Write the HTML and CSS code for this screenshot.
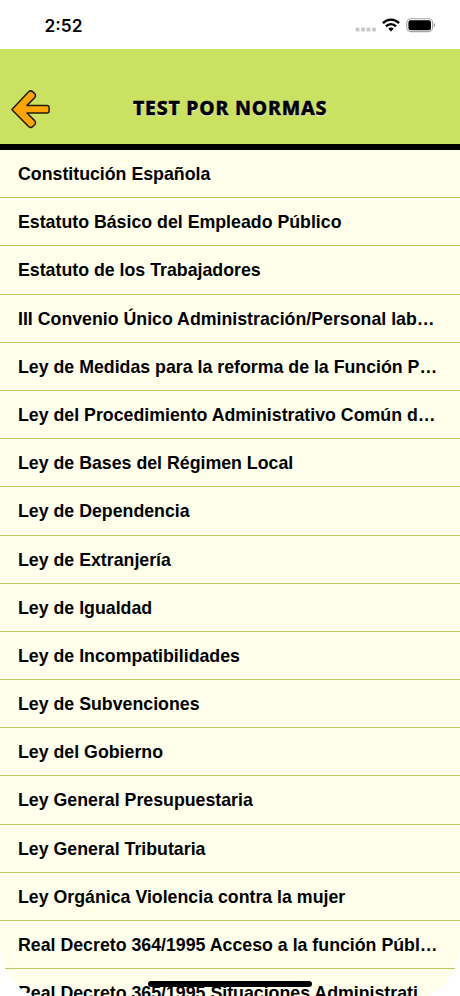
FILE: index.html
```html
<!DOCTYPE html>
<html lang="es">
<head>
  <meta charset="UTF-8">
  <title>Test por normas</title>
  <meta name="viewport" content="width=device-width, initial-scale=1">
  <link rel="stylesheet" href="styles.css">
</head>
<body>

  <div class="screen">
    <div class="status-bar">
      <span class="time">2:52</span>
      <div class="status-icons">
        <svg class="signal" width="22" height="5" viewBox="0 0 22 5" fill="#c9c9c9">
          <rect x="0.5" y="0.5" width="4" height="4" rx="1.2"/>
          <rect x="6" y="0.5" width="4" height="4" rx="1.2"/>
          <rect x="11.5" y="0.5" width="4" height="4" rx="1.2"/>
          <rect x="17" y="0.5" width="4" height="4" rx="1.2"/>
        </svg>
        <svg class="wifi" width="18" height="14" viewBox="0 0 18 14" fill="none" stroke="#000" stroke-width="2.4">
          <path d="M0.9 5.1C5.5 0.5 12.5 0.5 17.1 5.1"/>
          <path d="M4 8.3C6.8 5.4 11.2 5.4 14 8.3"/>
          <path d="M9 13.4L6.3 10.7C7.8 9.2 10.2 9.2 11.7 10.7Z" fill="#000" stroke="none"/>
        </svg>
        <svg class="battery" width="30" height="15" viewBox="0 0 30 15">
          <rect x="0.8" y="0.8" width="25.8" height="12.8" rx="4" fill="#fff" stroke="#a5a5a5" stroke-width="1.1"/>
          <rect x="2.4" y="2.2" width="22.6" height="10" rx="2.2" fill="#000"/>
          <path d="M27.8 5.1C29.7 5.8 29.7 8.6 27.8 9.3Z" fill="#999"/>
        </svg>
      </div>
    </div>

    <header>
      <svg class="back" width="42" height="42" viewBox="0 0 42 42">
        <path d="M2.2 20.2L18.6 2.8Q20.7 0.9 22.8 2.8L24.6 4.6Q26.4 6.6 24.6 8.8L17 16.4H37Q39.1 16.4 39.1 18.4V22Q39.1 24 37 24H17L24.6 31.6Q26.4 33.8 24.6 35.8L22.8 37.5Q20.7 39.4 18.6 37.5L2.2 21Q1.7 20.6 2.2 20.2Z" fill="#ffa500" stroke="#241c08" stroke-width="1.5" stroke-linejoin="round"/>
      </svg>
      <h1>TEST POR NORMAS</h1>
    </header>

    <ul class="list">
      <li>Constitución Española</li>
      <li>Estatuto Básico del Empleado Público</li>
      <li>Estatuto de los Trabajadores</li>
      <li>III Convenio Único Administración/Personal lab…</li>
      <li>Ley de Medidas para la reforma de la Función P…</li>
      <li>Ley del Procedimiento Administrativo Común d…</li>
      <li>Ley de Bases del Régimen Local</li>
      <li>Ley de Dependencia</li>
      <li>Ley de Extranjería</li>
      <li>Ley de Igualdad</li>
      <li>Ley de Incompatibilidades</li>
      <li>Ley de Subvenciones</li>
      <li>Ley del Gobierno</li>
      <li>Ley General Presupuestaria</li>
      <li>Ley General Tributaria</li>
      <li>Ley Orgánica Violencia contra la mujer</li>
      <li>Real Decreto 364/1995 Acceso a la función Públ…</li>
      <li>Real Decreto 365/1995 Situaciones Administrati…</li>
    </ul>

    <div class="home-indicator"></div>
  </div>

</body>
</html>
```
FILE: styles.css
```css
:root {
  --green: #cbe162;
  --line: #b5cb62;
  --cream: #ffffec;
}

* { box-sizing: border-box; }

html, body {
  height: 100%;
  overflow: hidden;
}

body {
  margin: 0;
  background-color: #fff;
  color: #000;
  font-family: "Liberation Sans", Arial, sans-serif;
}

.screen {
  position: relative;
  height: 1001px;
  background-color: var(--cream);
  border-radius: 0 0 56px 56px;
  overflow: hidden;
}

.status-bar {
  display: flex;
  justify-content: space-between;
  height: 49px;
  padding: 0 24px 0 44.5px;
  background-color: #fff;
}

.time {
  padding-top: 15px;
  font-family: Inter, sans-serif;
  font-size: 17.3px;
  font-weight: 600;
  line-height: 22px;
}

.status-icons {
  display: flex;
  padding-top: 18px;
}

.signal { margin: 9px 5px 0 0; }
.wifi { margin-right: 6px; }

header {
  display: flex;
  align-items: flex-start;
  height: 101px;
  padding: 40px 0 0 10px;
  background-color: var(--green);
  border-bottom: 6px solid #000;
}

h1 {
  margin: 5px 0 0 81px;
  font-family: "Noto Sans", sans-serif;
  font-size: 19.4px;
  font-weight: 800;
  line-height: 28px;
  letter-spacing: 0.8px;
  white-space: nowrap;
  text-shadow: 0 1px 1px #fff;
  -webkit-text-stroke: 0.4px #000;
}

.list {
  margin: 0;
  padding: 0;
  list-style: none;
}

.list li {
  height: 48.19px;
  padding-left: 18px;
  border-bottom: 1px solid var(--line);
  font-size: 17.75px;
  font-weight: bold;
  line-height: 49.6px;
  white-space: nowrap;
}

.home-indicator {
  position: absolute;
  left: 148px;
  top: 981px;
  width: 164px;
  height: 6px;
  border-radius: 3px;
  background-color: #000;
}
```
